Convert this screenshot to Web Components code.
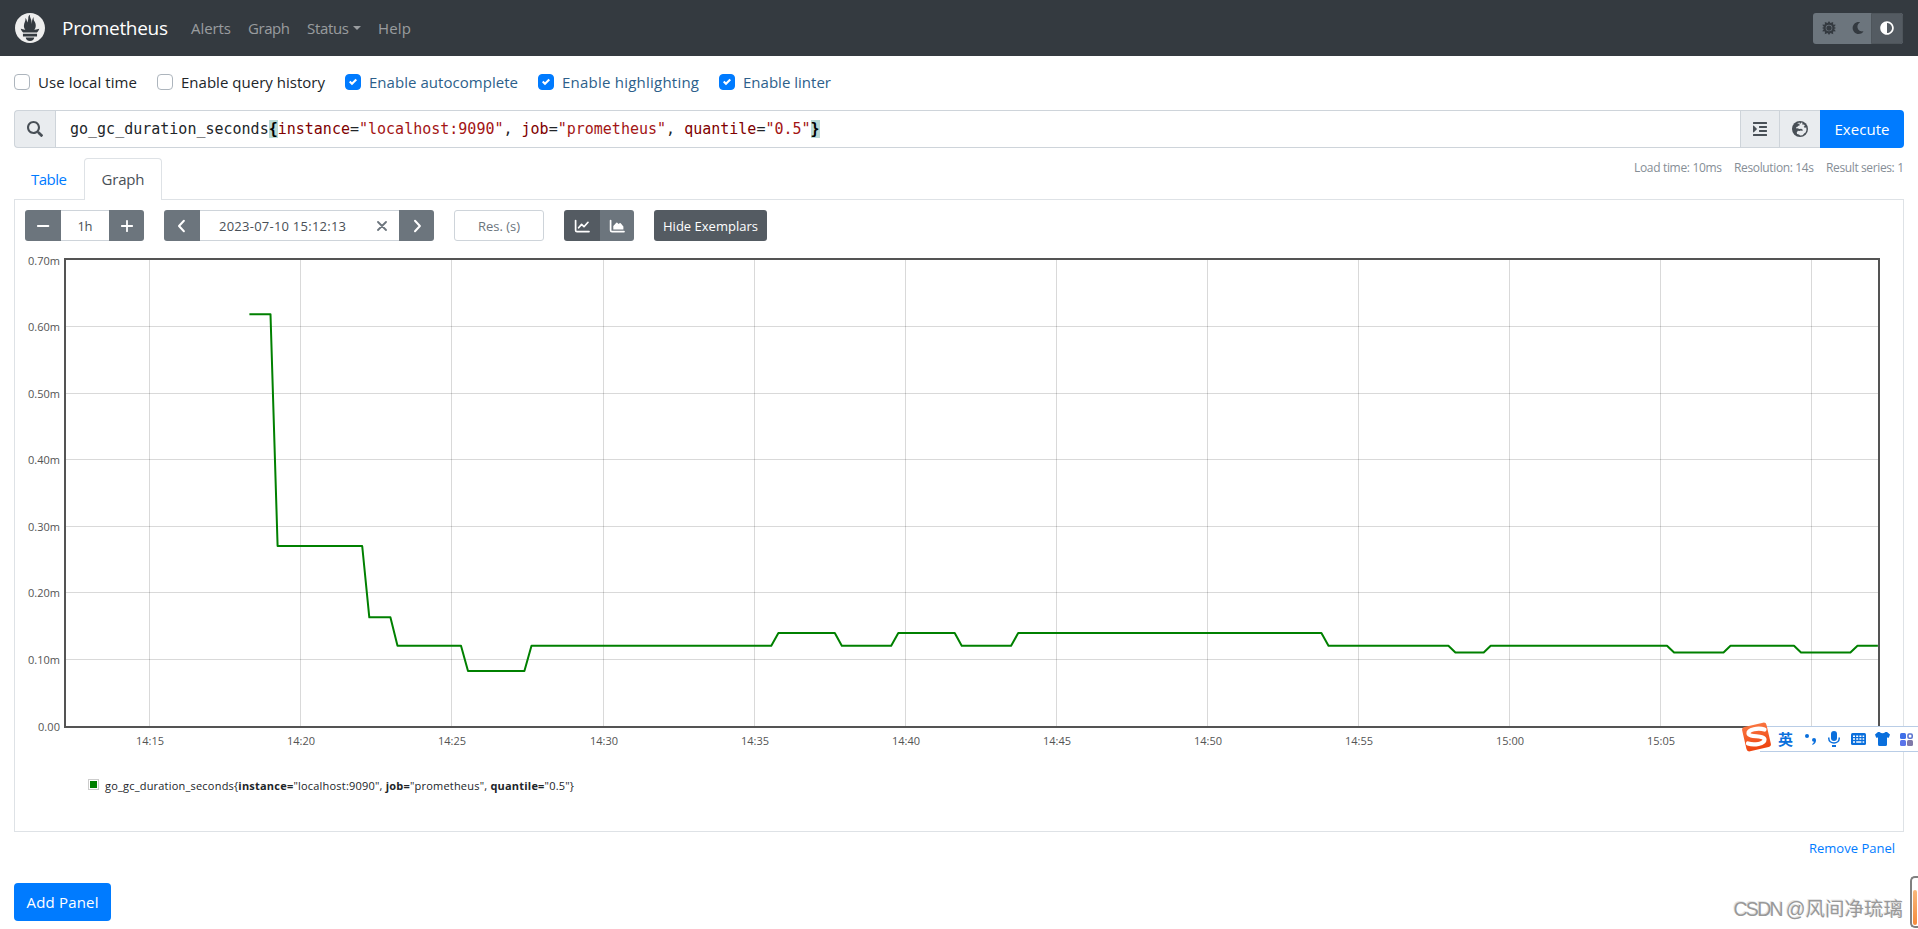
<!DOCTYPE html>
<html lang="en">
<head>
<meta charset="utf-8">
<title>Prometheus</title>
<style>
  body {
    margin: 0;
    height: 929px;
    overflow: hidden;
    background: #fff;
    color: #212529;
    font: 15px/24px "Open Sans", "Noto Sans", sans-serif;
  }
</style>
</head>
<body>
<prom-app></prom-app>
<ime-bar></ime-bar>
<page-watermark><text-run w="72">CSDN @</text-run>风间净琉璃</page-watermark>
<side-handle></side-handle>

<script>
const ICONS = {
  search: ['0 0 512 512', '<path d="M505 442.7L405.3 343c-4.5-4.5-10.6-7-17-7H372c27.6-35.3 44-79.7 44-128C416 93.1 322.9 0 208 0S0 93.1 0 208s93.1 208 208 208c48.3 0 92.7-16.4 128-44v16.3c0 6.4 2.5 12.5 7 17l99.7 99.7c9.4 9.4 24.6 9.4 33.9 0l28.3-28.3c9.4-9.4 9.4-24.6.1-34zM208 350c-78 0-142-64-142-142 0-78 64-142 142-142 78 0 142 64 142 142 0 78-64 142-142 142z"/>'],
  indent: ['0 0 448 512', '<path d="M27.31 363.3l96-96a16 16 0 0 0 0-22.62l-96-96C17.27 138.66 0 145.78 0 160v192c0 14.31 17.33 21.3 27.31 11.3zM432 416H16a16 16 0 0 0-16 16v32a16 16 0 0 0 16 16h416a16 16 0 0 0 16-16v-32a16 16 0 0 0-16-16zm3.17-128H204.83A12.82 12.82 0 0 0 192 300.83v38.34A12.82 12.82 0 0 0 204.83 352h230.34A12.82 12.82 0 0 0 448 339.17v-38.34A12.82 12.82 0 0 0 435.17 288zm0-128H204.83A12.82 12.82 0 0 0 192 172.83v38.34A12.82 12.82 0 0 0 204.83 224h230.34A12.82 12.82 0 0 0 448 211.17v-38.34A12.82 12.82 0 0 0 435.17 160zM432 32H16A16 16 0 0 0 0 48v32a16 16 0 0 0 16 16h416a16 16 0 0 0 16-16V48a16 16 0 0 0-16-16z"/>'],
  globe: ['0 0 16 16', '<circle cx="8" cy="8" r="8"/><path fill="#e9ecef" d="M5 2.6 7.3 1.6l1 .9-1 .7.6 1-1.500.5-.9 1.100-1.300.3.2 1.300 1.600-.2 1 .9 2.200-.4 1.400.9-.1 1.400-1.600-.6-1.400.6-1.600-.2-1.200 1.600.4 1.700 1.900.5 1.200 1 2.400-.3 1.800-2 1.200-.8.9-2.500-.2-2.400-1.600.2-1-1.100 1.200-1-.9-1.300-1.400.3-.5-1.200.9-.4-1.700-.6-.7 1.300z"/>'],
  sun: ['0 0 16 16', '<path fill-rule="evenodd" d="M8 0l1.600 2.300L12.800 1l-.2 3.100 3.200.3L13.800 6.800 16 8l-2.200 1.200 2 2.400-3.200.3.2 3.100-3.200-1.300L8 16l-1.600-2.300L3.200 15l.2-3.100-3.200-.3 2-2.400L0 8l2.200-1.200-2-2.400 3.200-.3L3.200 1l3.200 1.300zM8 4.200a3.800 3.800 0 1 0 0 7.600 3.800 3.800 0 0 0 0-7.600z"/><circle cx="8" cy="8" r="3"/>'],
  moon: ['0 0 512 512', '<path d="M283.211 512c78.962 0 151.079-35.925 198.857-94.792 7.068-8.708-.639-21.43-11.562-19.35-124.203 23.654-238.262-71.576-238.262-196.954 0-72.222 38.662-138.635 101.498-174.394 9.686-5.512 7.25-20.197-3.756-22.23A258.156 258.156 0 0 0 283.211 0c-141.309 0-256 114.511-256 256 0 141.309 114.511 256 256 256z"/>'],
  adjust: ['0 0 512 512', '<path d="M8 256c0 136.966 111.033 248 248 248s248-111.034 248-248S392.966 8 256 8 8 119.033 8 256zm248 184V72c101.705 0 184 82.311 184 184 0 101.705-82.311 184-184 184z"/>'],
  minus: ['0 0 14 14', '<path d="M1.8 7h10.6" stroke="currentColor" stroke-width="1.8" stroke-linecap="round"/>'],
  plus: ['0 0 14 14', '<path d="M1.8 7h10.4M7 1.8v10.4" stroke="currentColor" stroke-width="1.8" stroke-linecap="round"/>'],
  left: ['0 0 14 14', '<path d="M8.900 1.8 4 7l4.900 5.200" fill="none" stroke="currentColor" stroke-width="2" stroke-linecap="round" stroke-linejoin="round"/>'],
  right: ['0 0 14 14', '<path d="M5 1.8l4.900 5.200L5 12.200" fill="none" stroke="currentColor" stroke-width="2" stroke-linecap="round" stroke-linejoin="round"/>'],
  times: ['0 0 10 10', '<path d="M1 1l8 8M9 1L1 9" stroke="currentColor" stroke-width="1.8" stroke-linecap="round"/>'],
  line: ['0 0 16 14', '<path d="M1.6 1.6v9.6q0 1.4 1.4 1.4h12" fill="none" stroke="currentColor" stroke-width="1.7" stroke-linecap="round"/><path d="M4.6 8.8 7.6 5.4l2.4 2.3 4-4.4" fill="none" stroke="currentColor" stroke-width="1.7" stroke-linecap="round" stroke-linejoin="round"/>'],
  area: ['0 0 16 14', '<path d="M1.6 1.6v9.6q0 1.4 1.4 1.4h12" fill="none" stroke="currentColor" stroke-width="1.7" stroke-linecap="round"/><path d="M4.3 10.6V6.9l3-3.2q.5-.5 1 0l1.3 1.2 1.3-.9q.4-.2.8.2l2.7 3.2v3.2z"/>'],
  check: ['0 0 8 8', '<path fill="#fff" d="M6.564.75l-3.59 3.612-1.538-1.55L0 4.26l2.974 2.99L8 2.193z"/>'],
  logo: ['0 0 24 24', '<path d="M12 0C5.373 0 0 5.372 0 12c0 6.627 5.373 12 12 12s12-5.373 12-12c0-6.628-5.373-12-12-12zm0 22.46c-1.885 0-3.414-1.26-3.414-2.814h6.828c0 1.553-1.528 2.813-3.414 2.813zm5.64-3.745H6.36v-2.046h11.28v2.046zm-.04-3.098H6.391c-.037-.043-.075-.086-.111-.13-1.155-1.401-1.427-2.133-1.69-2.879-.005-.025 1.4.287 2.395.511 0 0 .513.119 1.262.255-.72-.843-1.147-1.915-1.147-3.01 0-2.406 1.845-4.508 1.18-6.207.648.053 1.34 1.367 1.387 3.422.689-.951.977-2.69.977-3.755 0-1.103.727-2.385 1.454-2.429-.648 1.069.168 1.984.894 4.256.272.854.237 2.29.447 3.201.07-1.892.395-4.652 1.595-5.605-.529 1.2.079 2.702.494 3.424.671 1.164 1.078 2.047 1.078 3.716a4.642 4.642 0 01-1.11 2.996c.792-.149 1.34-.283 1.34-.283l2.573-.502s-.374 1.538-1.81 3.019z"/>'],
  mic: ['0 0 12 16', '<rect x="3" y="0" width="6" height="10" rx="3"/><path d="M.8 6.5v1a5.2 4.4 0 0 0 10.4 0v-1" fill="none" stroke="currentColor" stroke-width="1.5"/><path d="M4 14h4v2H4z"/>'],
  keyboard: ['0 0 15 12', '<rect width="15" height="12" rx="1.5"/><path stroke="#fff" stroke-width="1.5" d="M2 3.2h2m1.2 0h2m1.2 0h2m1.2 0h1.6M2 6h2m1.2 0h2m1.2 0h2m1.2 0h1.6M2 9h2m1.2 0h5.2m1.2 0h1.6"/>'],
  shirt: ['0 0 15 14', '<path d="M4.500 0Q7.500 2.400 10.500 0H12l3 2.400-1.200 3.400-1.800-.4V12.500Q12 14 10.500 14h-6Q3 14 3 12.500V5.400l-1.800.4L0 2.400 3 0z"/>'],
  apps: ['0 0 13 13', '<rect width="6" height="6" rx="1.5" fill="#3f6fe8"/><rect x="8" y="1" width="4.2" height="4.2" rx="1.2" fill="none" stroke="#5c74cf" stroke-width="1.6"/><rect y="7" width="6" height="6" rx="1.5" fill="#5a74ea"/><rect x="7" y="7" width="6" height="6" rx="1.5" fill="#8079a8"/>'],
};

// Small inline icon, sized with --w / --h
class PromIcon extends HTMLElement {
  connectedCallback() {
    const [box, body] = ICONS[this.getAttribute('name')];
    this.attachShadow({ mode: 'open' }).innerHTML = `
      <style>
        :host { display: inline-flex; flex: none; }
        svg { display: block; width: var(--w, 14px); height: var(--h, 14px); fill: currentColor; }
      </style>
      <svg viewBox="${box}">${body}</svg>
    `;
  }
}
customElements.define('prom-icon', PromIcon);

// Text run tracked to an exact width in pixels
class TextRun extends HTMLElement {
  connectedCallback() {
    this.attachShadow({ mode: 'open' }).innerHTML = `
      <style>
        :host { display: inline-block; flex: none; white-space: nowrap; }
      </style>
      <slot></slot>
    `;
    const width = parseFloat(this.getAttribute('w'));
    const natural = this.getBoundingClientRect().width;
    const gaps = this.textContent.length - 1;
    if (gaps > 0) {
      this.style.letterSpacing = `${(width - natural) / gaps}px`;
    }
    this.style.width = `${width}px`;
  }
}

class PromNavbar extends HTMLElement {
  connectedCallback() {
    this.attachShadow({ mode: 'open' }).innerHTML = `
      <style>
        :host {
          display: flex;
          align-items: center;
          height: 56px;
          box-sizing: border-box;
          padding: 0 15px;
          background: #343a40;
          color: rgba(255, 255, 255, 0.5);
        }
        .logo { --w: 30px; --h: 30px; margin-bottom: 1px; color: #eee; }
        .brand { margin: 0 23px 0 17px; font-size: 19px; color: #fff; }
        nav { display: flex; align-items: center; gap: 17px; }
        .drop { display: flex; align-items: center; gap: 4px; }
        .drop::after {
          content: "";
          border: 4px solid transparent;
          border-top-color: currentColor;
          border-bottom: 0;
        }
        .themes {
          display: flex;
          margin-left: auto;
          width: 90px;
          height: 31px;
          border-radius: 3px;
          background: #6c757d;
          color: #343a40;
          overflow: hidden;
        }
        .themes span { display: flex; align-items: center; justify-content: center; width: 29px; padding-left: 3px; box-sizing: border-box; }
        .themes span:last-child { width: 32px; padding: 0 1px 0 0; background: #545b62; border: 1px solid #4e555b; border-radius: 0 3px 3px 0; color: #fff; }
        .moon { --w: 12px; --h: 12px; }
      </style>
      <prom-icon class="logo" name="logo"></prom-icon>
      <text-run class="brand" w="106">Prometheus</text-run>
      <nav>
        <text-run w="40">Alerts</text-run>
        <text-run w="42">Graph</text-run>
        <span class="drop"><text-run w="42">Status</text-run></span>
        <text-run w="33">Help</text-run>
      </nav>
      <div class="themes">
        <span><prom-icon name="sun"></prom-icon></span>
        <span><prom-icon class="moon" name="moon"></prom-icon></span>
        <span><prom-icon name="adjust"></prom-icon></span>
      </div>
    `;
  }
}

class PromCheckbox extends HTMLElement {
  connectedCallback() {
    const checked = this.hasAttribute('checked');
    this.attachShadow({ mode: 'open' }).innerHTML = `
      <style>
        :host { display: flex; align-items: center; gap: 8px; }
        :host([checked]) { color: #2d5f8b; }
        .box {
          display: flex;
          align-items: center;
          justify-content: center;
          box-sizing: border-box;
          width: 16px;
          height: 16px;
          border: 1px solid #adb5bd;
          border-radius: 4px;
          --w: 8px;
          --h: 8px;
        }
        :host([checked]) .box { background: #007bff; border-color: #007bff; }
      </style>
      <span class="box">${checked ? '<prom-icon name="check"></prom-icon>' : ''}</span>
      <slot></slot>
    `;
  }
}

class PromQuery extends HTMLElement {
  connectedCallback() {
    this.attachShadow({ mode: 'open' }).innerHTML = `
      <style>
        :host {
          display: flex;
          height: 38px;
          --w: 16px;
          --h: 16px;
        }
        .addon {
          display: flex;
          align-items: center;
          justify-content: center;
          box-sizing: border-box;
          width: 41px;
          background: #e9ecef;
          border: 1px solid #ced4da;
          border-right: 0;
          color: #495057;
        }
        .addon.first { border-radius: 4px 0 0 4px; }
        .addon.indent { --w: 14px; width: 39px; }
        .expr {
          flex: 1;
          box-sizing: border-box;
          padding-left: 14px;
          border: 1px solid #ced4da;
          border-right: 0;
          font: 15px/36px "DejaVu Sans Mono", monospace;
          color: #212529;
          white-space: pre;
        }
        .label { color: #800000; }
        .str { color: #a31515; }
        .brace { background: #bad9d5; color: #000; font-weight: bold; }
        .run {
          display: flex;
          align-items: center;
          justify-content: center;
          width: 84px;
          border-radius: 0 4px 4px 0;
          background: #007bff;
          color: #fff;
        }
      </style>
      <span class="addon first"><prom-icon name="search"></prom-icon></span>
      <div class="expr">go_gc_duration_seconds<span class="brace">{</span><span class="label">instance</span>=<span class="str">"localhost:9090"</span>, <span class="label">job</span>=<span class="str">"prometheus"</span>, <span class="label">quantile</span>=<span class="str">"0.5"</span><span class="brace">}</span></div>
      <span class="addon indent"><prom-icon name="indent"></prom-icon></span>
      <span class="addon"><prom-icon name="globe"></prom-icon></span>
      <span class="run"><text-run w="55">Execute</text-run></span>
    `;
  }
}

class PromTabs extends HTMLElement {
  connectedCallback() {
    this.attachShadow({ mode: 'open' }).innerHTML = `
      <style>
        :host { display: flex; height: 42px; margin-bottom: -1px; z-index: 1; }
        .tab {
          display: flex;
          align-items: center;
          justify-content: center;
          box-sizing: border-box;
          width: 70px;
          height: 42px;
          color: #007bff;
        }
        .tab.active {
          width: 78px;
          padding-bottom: 1px;
          background: #fff;
          border: 1px solid #dee2e6;
          border-bottom: 0;
          border-radius: 4px 4px 0 0;
          color: #495057;
        }
        .stats { display: flex; gap: 12px; margin: -2px 0 0 auto; font-size: 12px; color: #868e96; }
      </style>
      <span class="tab"><text-run w="36">Table</text-run></span>
      <span class="tab active"><text-run w="43">Graph</text-run></span>
      <div class="stats">
        <text-run w="88">Load time: 10ms</text-run>
        <text-run w="80">Resolution: 14s</text-run>
        <text-run w="78">Result series: 1</text-run>
      </div>
    `;
  }
}

class GraphControls extends HTMLElement {
  connectedCallback() {
    this.attachShadow({ mode: 'open' }).innerHTML = `
      <style>
        :host { display: flex; gap: 20px; height: 31px; font-size: 13px; color: #495057; }
        .group { display: flex; border-radius: 3px; overflow: hidden; }
        .btn {
          display: flex;
          align-items: center;
          justify-content: center;
          width: 35px;
          background: #6c757d;
          color: #fff;
        }
        .btn.first { width: 36px; }
        .btn.last { width: 34px; }
        .btn.active { background: #545b62; }
        .field {
          display: flex;
          align-items: center;
          justify-content: center;
          box-sizing: border-box;
          border: solid #ced4da;
          border-width: 1px 0;
        }
        .range { width: 48px; }
        .time { width: 199px; justify-content: space-between; padding: 0 12px 0 19px; }
        .time prom-icon { --w: 10px; --h: 10px; color: #6c757d; }
        .res { width: 90px; border-width: 1px; border-radius: 3px; color: #6c757d; }
        .chart { --w: 16px; }
        .btn.hide { width: 113px; border-radius: 3px; }
      </style>
      <div class="group">
        <span class="btn first"><prom-icon name="minus"></prom-icon></span>
        <span class="field range"><text-run w="15">1h</text-run></span>
        <span class="btn"><prom-icon name="plus"></prom-icon></span>
      </div>
      <div class="group">
        <span class="btn first"><prom-icon name="left"></prom-icon></span>
        <span class="field time"><text-run w="127">2023-07-10 15:12:13</text-run><prom-icon name="times"></prom-icon></span>
        <span class="btn"><prom-icon name="right"></prom-icon></span>
      </div>
      <span class="field res"><text-run w="42">Res. (s)</text-run></span>
      <div class="group chart">
        <span class="btn first active"><prom-icon name="line"></prom-icon></span>
        <span class="btn last"><prom-icon name="area"></prom-icon></span>
      </div>
      <span class="btn active hide"><text-run w="95">Hide Exemplars</text-run></span>
    `;
  }
}

// [sample index, value in thousandths]
const SERIES = [
  [26, 0.6185], [29, 0.6185], [30, 0.2704], [42, 0.2704], [43, 0.1633], [46, 0.1633],
  [47, 0.1206], [56, 0.1206], [57, 0.0826], [65, 0.0826], [66, 0.1206], [100, 0.1206],
  [101, 0.1397], [109, 0.1397], [110, 0.1206], [117, 0.1206], [118, 0.1397], [126, 0.1397],
  [127, 0.1206], [134, 0.1206], [135, 0.1397], [178, 0.1397], [179, 0.1206], [196, 0.1206],
  [197, 0.1104], [201, 0.1104], [202, 0.1206], [227, 0.1206], [228, 0.1104], [235, 0.1104],
  [236, 0.1206], [245, 0.1206], [246, 0.1104], [253, 0.1104], [254, 0.1206], [256.9, 0.1206],
];

class PromGraph extends HTMLElement {
  connectedCallback() {
    const left = 51, top = 10, width = 1812, height = 466;
    const bottom = top + height;
    const step = 7.053, unit = height / 0.7;

    let grid = '';
    let labels = '';
    for (let i = 0; i <= 7; i++) {
      const y = bottom - i * unit / 10;
      if (i > 0 && i < 7) grid += `<path d="M${left} ${Math.floor(y) + 0.5}h${width}"/>`;
      const label = i ? `0.${i}0m` : '0.00';
      const w = i ? 32 : 22;
      labels += `<text x="${45 - w}" y="${Math.floor(y) + 5}" textLength="${w}">${label}</text>`;
    }
    for (let i = 0; i < 12; i++) {
      const x = left + 83.5 + Math.floor(i * 151.05 + 0.85);
      grid += `<path d="M${x} ${top}v${height}"/>`;
      const min = 15 + i * 5;
      const label = `${14 + Math.floor(min / 60)}:${String(min % 60).padStart(2, '0')}`;
      labels += `<text x="${x - 13.5}" y="494.5" textLength="28">${label}</text>`;
    }
    const points = SERIES.map(([n, v]) => `${(left + n * step).toFixed(1)},${(bottom - v * unit).toFixed(1)}`).join(' ');

    this.attachShadow({ mode: 'open' }).innerHTML = `
      <style>
        :host { display: block; }
        svg { display: block; font: 11px "Open Sans", "Noto Sans", sans-serif; fill: #545454; }
        .grid { stroke: rgba(0, 0, 0, 0.15); }
      </style>
      <svg width="1888" height="510">
        <g class="grid">${grid}</g>
        <polyline points="${points}" fill="none" stroke="#008000" stroke-width="2" stroke-linejoin="round"/>
        <rect x="${left - 1}" y="${top - 1}" width="${width + 2}" height="${height + 2}" fill="none" stroke="#545454" stroke-width="2"/>
        ${labels}
      </svg>
    `;
  }
}

class GraphLegend extends HTMLElement {
  connectedCallback() {
    this.attachShadow({ mode: 'open' }).innerHTML = `
      <style>
        :host { display: flex; align-items: center; gap: 7px; height: 24px; padding-left: 74px; font-size: 11px; }
        i { width: 7px; height: 7px; margin-bottom: 3px; border: 1px solid #fff; outline: 1px solid #ccc; background: #008000; }
      </style>
      <i></i>
      <text-run w="469">go_gc_duration_seconds{<b>instance=</b>"localhost:9090", <b>job=</b>"prometheus", <b>quantile=</b>"0.5"}</text-run>
    `;
  }
}

class PromApp extends HTMLElement {
  connectedCallback() {
    this.attachShadow({ mode: 'open' }).innerHTML = `
      <style>
        :host { display: block; }
        main { display: flex; flex-direction: column; padding: 0 14px; }
        .options { display: flex; align-items: center; gap: 20px; height: 52px; margin-bottom: 2px; }
        prom-tabs { margin-top: 10px; }
        .panel { box-sizing: border-box; height: 633px; border: 1px solid #dee2e6; }
        graph-controls { margin: 10px 0 9px 10px; }
        graph-legend { margin-top: 14px; }
        .remove { align-self: flex-end; margin: 4px 9px 0 0; font-size: 13px; color: #007bff; }
        .add {
          display: flex;
          align-items: center;
          justify-content: center;
          width: 97px;
          height: 38px;
          margin-top: 23px;
          border-radius: 4px;
          background: #007bff;
          color: #fff;
        }
      </style>
      <prom-navbar></prom-navbar>
      <main>
        <div class="options">
          <prom-checkbox><text-run w="99">Use local time</text-run></prom-checkbox>
          <prom-checkbox><text-run w="144">Enable query history</text-run></prom-checkbox>
          <prom-checkbox checked><text-run w="149">Enable autocomplete</text-run></prom-checkbox>
          <prom-checkbox checked><text-run w="137">Enable highlighting</text-run></prom-checkbox>
          <prom-checkbox checked><text-run w="88">Enable linter</text-run></prom-checkbox>
        </div>
        <prom-query></prom-query>
        <prom-tabs></prom-tabs>
        <section class="panel">
          <graph-controls></graph-controls>
          <prom-graph></prom-graph>
          <graph-legend></graph-legend>
        </section>
        <text-run class="remove" w="86">Remove Panel</text-run>
        <span class="add"><text-run w="72">Add Panel</text-run></span>
      </main>
    `;
  }
}

// Input method toolbar floating over the page
class ImeBar extends HTMLElement {
  connectedCallback() {
    this.attachShadow({ mode: 'open' }).innerHTML = `
      <style>
        :host { position: absolute; left: 1740px; top: 721px; width: 178px; height: 32px; color: #0a6fdc; }
        .bar {
          display: flex;
          align-items: center;
          box-sizing: border-box;
          height: 26px;
          margin: 5px 0 0 20px;
          padding-left: 18px;
          border: solid #b9cde6;
          border-width: 1px 0;
          background: #fff;
        }
        .bar > * { margin-right: 11px; }
        .lang { width: 15px; font: bold 15px/24px "Noto Sans CJK SC", sans-serif; }
        .s { position: absolute; left: 0; top: 0; }
      </style>
      <div class="bar">
        <span class="lang">英</span>
        <svg width="13" height="12" fill="currentColor"><circle cx="3" cy="3" r="2"/><path d="M8 7a2 2 0 1 1 4 0q.2 3.400-3.400 4.900l-.4-1q1.600-.7 1.700-2.100Q8 8.700 8 7z"/></svg>
        <prom-icon name="mic" style="--w:12px;--h:16px"></prom-icon>
        <prom-icon name="keyboard" style="--w:15px;--h:12px;margin-right:9px"></prom-icon>
        <prom-icon name="shirt" style="--w:15px;margin-right:10px"></prom-icon>
        <prom-icon name="apps" style="--w:13px;--h:13px;margin:0"></prom-icon>
      </div>
      <svg class="s" width="33" height="32">
        <defs><linearGradient id="g" x2="0" y2="1"><stop stop-color="#f9743f"/><stop offset="1" stop-color="#ee4410"/></linearGradient></defs>
        <rect x="4" y="3.500" width="25" height="25" rx="3" fill="url(#g)" transform="rotate(-13 16.500 16)"/>
        <path d="M24.500 8.500C18 6.500 8 8.500 8.500 12.500S24.500 14 24.500 18.500 14 24.500 8 22.500" fill="none" stroke="#fff" stroke-width="4.200" stroke-linecap="round"/>
      </svg>
    `;
  }
}

class PageWatermark extends HTMLElement {
  connectedCallback() {
    this.attachShadow({ mode: 'open' }).innerHTML = `
      <style>
        :host {
          position: absolute;
          right: 15px;
          top: 895px;
          font: 19.5px/28px "Liberation Sans", "Noto Sans CJK SC", sans-serif;
          color: #999;
          text-shadow: -1px -1px 0 #e4e4e4;
          white-space: nowrap;
        }
      </style>
      <slot></slot>
    `;
  }
}

class SideHandle extends HTMLElement {
  connectedCallback() {
    this.attachShadow({ mode: 'open' }).innerHTML = `
      <style>
        :host {
          position: absolute;
          left: 1910px;
          top: 876px;
          box-sizing: border-box;
          width: 8px;
          height: 52px;
          padding: 12px 0 0 1px;
          border: 2px solid #808080;
          border-right: 0;
          border-radius: 5px 0 0 5px;
          background: #fff;
        }
        div { width: 4px; height: 35px; border-radius: 2px; background: linear-gradient(#f9b87c, #f58a3c); }
      </style>
      <div></div>
    `;
  }
}

customElements.define('page-watermark', PageWatermark);
customElements.define('text-run', TextRun);
customElements.define('prom-navbar', PromNavbar);
customElements.define('prom-checkbox', PromCheckbox);
customElements.define('prom-query', PromQuery);
customElements.define('prom-tabs', PromTabs);
customElements.define('graph-controls', GraphControls);
customElements.define('prom-graph', PromGraph);
customElements.define('graph-legend', GraphLegend);
customElements.define('prom-app', PromApp);
customElements.define('ime-bar', ImeBar);
customElements.define('side-handle', SideHandle);
</script>
</body>
</html>
